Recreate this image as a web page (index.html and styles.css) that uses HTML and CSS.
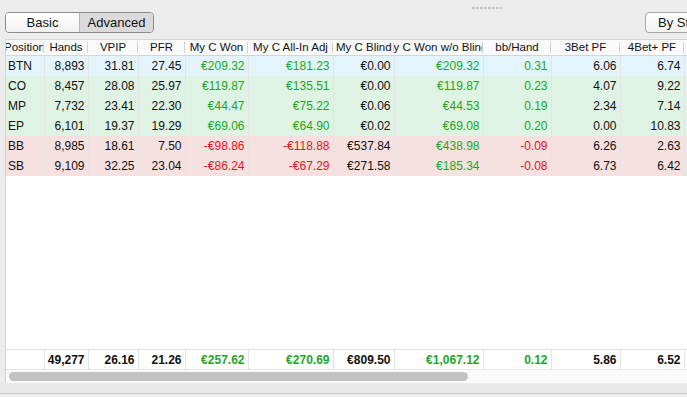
FILE: index.html
```html
<!doctype html>
<html lang="en">
  <head>
    <meta charset="UTF-8" />
    <title>Position Stats</title>
    <link rel="stylesheet" href="styles.css">
  </head>
  <body>
    <!-- Toolbar - view switch and grouping button -->
    <div class="toolbar">
      <div class="handle"></div>
      <div class="segmented">
        <div class="segment">Basic</div>
        <div class="segment selected">Advanced</div>
      </div>
      <div class="button">By Stakes</div>
    </div>

    <!-- Stats grid -->
    <div class="panel">
      <table class="grid">
        <colgroup>
          <col style="width:39px"><col style="width:44px"><col style="width:50px"><col style="width:47px">
          <col style="width:63px"><col style="width:85px"><col style="width:61px"><col style="width:89px">
          <col style="width:68px"><col style="width:69px"><col style="width:64px"><col style="width:70px">
        </colgroup>
        <thead>
          <tr>
            <th><div class="label"><span>Position</span></div></th>
            <th><div class="label"><span>Hands</span></div></th>
            <th><div class="label"><span>VPIP</span></div></th>
            <th><div class="label"><span>PFR</span></div></th>
            <th><div class="label"><span>My C Won</span></div></th>
            <th><div class="label"><span>My C All-In Adj</span></div></th>
            <th><div class="label start"><span>My C Blinds</span></div></th>
            <th><div class="label"><span>My C Won w/o Blinds</span></div></th>
            <th><div class="label"><span>bb/Hand</span></div></th>
            <th><div class="label"><span>3Bet PF</span></div></th>
            <th><div class="label"><span>4Bet+ PF</span></div></th>
            <th><div class="label"><span>WTSD</span></div></th>
          </tr>
        </thead>
        <tbody>
          <tr class="blue">
            <td class="pos">BTN</td><td>8,893</td><td>31.81</td><td>27.45</td>
            <td class="win">€209.32</td><td class="win">€181.23</td><td>€0.00</td><td class="win">€209.32</td>
            <td class="win">0.31</td><td>6.06</td><td>6.74</td><td></td>
          </tr>
          <tr class="green">
            <td class="pos">CO</td><td>8,457</td><td>28.08</td><td>25.97</td>
            <td class="win">€119.87</td><td class="win">€135.51</td><td>€0.00</td><td class="win">€119.87</td>
            <td class="win">0.23</td><td>4.07</td><td>9.22</td><td></td>
          </tr>
          <tr class="green">
            <td class="pos">MP</td><td>7,732</td><td>23.41</td><td>22.30</td>
            <td class="win">€44.47</td><td class="win">€75.22</td><td>€0.06</td><td class="win">€44.53</td>
            <td class="win">0.19</td><td>2.34</td><td>7.14</td><td></td>
          </tr>
          <tr class="green">
            <td class="pos">EP</td><td>6,101</td><td>19.37</td><td>19.29</td>
            <td class="win">€69.06</td><td class="win">€64.90</td><td>€0.02</td><td class="win">€69.08</td>
            <td class="win">0.20</td><td>0.00</td><td>10.83</td><td></td>
          </tr>
          <tr class="red">
            <td class="pos">BB</td><td>8,985</td><td>18.61</td><td>7.50</td>
            <td class="loss">-€98.86</td><td class="loss">-€118.88</td><td>€537.84</td><td class="win">€438.98</td>
            <td class="loss">-0.09</td><td>6.26</td><td>2.63</td><td></td>
          </tr>
          <tr class="red">
            <td class="pos">SB</td><td>9,109</td><td>32.25</td><td>23.04</td>
            <td class="loss">-€86.24</td><td class="loss">-€67.29</td><td>€271.58</td><td class="win">€185.34</td>
            <td class="loss">-0.08</td><td>6.73</td><td>6.42</td><td></td>
          </tr>
        </tbody>
      </table>

      <div class="filler"></div>

      <table class="grid totals">
        <colgroup>
          <col style="width:39px"><col style="width:44px"><col style="width:50px"><col style="width:47px">
          <col style="width:63px"><col style="width:85px"><col style="width:61px"><col style="width:89px">
          <col style="width:68px"><col style="width:69px"><col style="width:64px"><col style="width:70px">
        </colgroup>
        <tr>
          <td></td><td>49,277</td><td>26.16</td><td>21.26</td>
          <td class="win">€257.62</td><td class="win">€270.69</td><td>€809.50</td><td class="win">€1,067.12</td>
          <td class="win">0.12</td><td>5.86</td><td>6.52</td><td></td>
        </tr>
      </table>

      <div class="scrollbar">
        <div class="thumb"></div>
      </div>
    </div>

    <div class="bottom-strip"></div>
  </body>
</html>
```

FILE: styles.css
```css
/* Colours used across the window */
:root {
  --window-bg: #ececec;
  --text: #111111;
  --win: #1ea51e;
  --loss: #e5141b;
  --row-blue: #e3f4fc;
  --row-green: #def3e3;
  --row-red: #f7e0e0;
  --cell-line: #e4e4e4;
}

body {
  margin: 0;
  background-color: var(--window-bg);
  font-family: "Liberation Sans", Arial, sans-serif;
  color: var(--text);
  overflow: hidden;
}

/* Toolbar */
.toolbar {
  position: relative;
  display: flex;
  justify-content: space-between;
  align-items: flex-start;
  height: 39px;
  box-sizing: border-box;
  padding: 12px 0 0 5px;
}

.handle {
  position: absolute;
  top: 7px;
  left: 472px;
  width: 30px;
  height: 2px;
  background: repeating-linear-gradient(to right, #c9c9c9 0 3px, transparent 3px 4px);
}

.segmented {
  display: flex;
  height: 21px;
  box-sizing: border-box;
  border: 1px solid #8c8c8c;
  border-radius: 4px;
  overflow: hidden;
  font-size: 13px;
}

.segment {
  width: 73px;
  line-height: 19px;
  text-align: center;
  background: linear-gradient(#ffffff, #f1f1f1);
}

.segment.selected {
  width: 73px;
  border-left: 1px solid #b5b5b5;
  background: #dadada;
}

.button {
  width: 70px;
  height: 21px;
  box-sizing: border-box;
  margin-right: -28px;
  padding-left: 12px;
  border: 1px solid #a6a6a6;
  border-radius: 4px;
  background: linear-gradient(#ffffff, #f3f3f3);
  font-size: 13px;
  line-height: 19px;
  white-space: nowrap;
  overflow: hidden;
}

/* Grid panel */
.panel {
  display: flex;
  flex-direction: column;
  height: 344px;
  margin-left: 5px;
  background: #ffffff;
  border-left: 1px solid #d4d4d4;
  box-sizing: border-box;
  overflow: hidden;
}

.grid {
  table-layout: fixed;
  border-collapse: collapse;
  width: 749px;
  margin-left: -1px;
  flex-shrink: 0;
}

.grid th {
  position: relative;
  height: 15px;
  padding: 0;
  border-top: 1px solid #d5d5d5;
  border-bottom: 1px solid #d5d5d5;
  background: #fafafa;
  font-weight: normal;
  font-size: 11.5px;
}

.grid th::after {
  content: "";
  position: absolute;
  right: 0;
  top: 2px;
  bottom: 2px;
  width: 1px;
  background: #d2d2d2;
}

.label {
  display: flex;
  justify-content: center;
  overflow: hidden;
  white-space: nowrap;
  line-height: 15px;
}

.label.start {
  justify-content: flex-start;
  padding-left: 3px;
  margin-right: 2px;
}

.grid td {
  height: 20px;
  padding: 0 3px 0 0;
  font-size: 12px;
  text-align: right;
  white-space: nowrap;
  overflow: hidden;
  border-right: 1px solid var(--cell-line);
  box-sizing: border-box;
}

.grid td.pos {
  text-align: left;
  padding-left: 3px;
}

.blue td { background: var(--row-blue); }
.green td { background: var(--row-green); }
.red td { background: var(--row-red); }

.win { color: var(--win); }
.loss { color: var(--loss); }

.filler {
  flex: 1;
}

.totals td {
  font-weight: bold;
  border-top: 1px solid var(--cell-line);
  border-bottom: 1px solid var(--cell-line);
}

/* Horizontal scrollbar */
.scrollbar {
  flex-shrink: 0;
  height: 13px;
  padding: 2px 0 0 3px;
  box-sizing: border-box;
  background: #fafafa;
}

.thumb {
  width: 459px;
  height: 9px;
  border-radius: 5px;
  background: #c2c2c2;
}

.bottom-strip {
  height: 10px;
  background: #e9e9e9;
  border-bottom: 1px solid #c8c8c8;
}
```
